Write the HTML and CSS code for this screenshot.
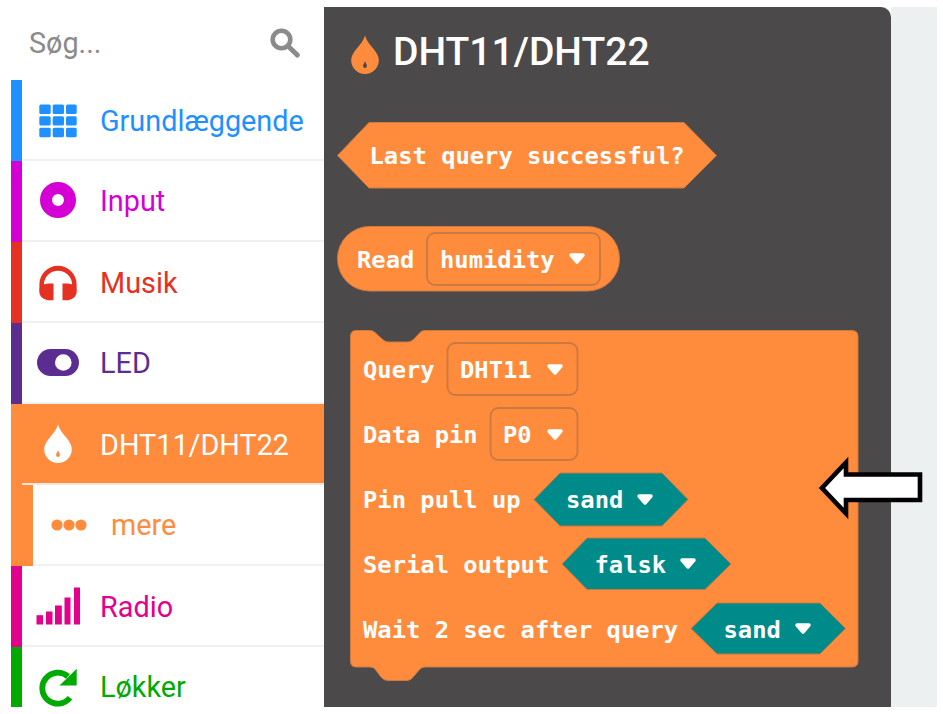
FILE: index.html
```html
<!DOCTYPE html>
<html lang="da">
<head>
<meta charset="utf-8">
<title>DHT11/DHT22</title>
<link rel="stylesheet" href="styles.css">
</head>
<body>
<div class="app">
  <aside class="sidebar">
    <div class="search">
      <input class="search-input" type="text" placeholder="Søg...">
      <svg class="search-icon" viewBox="0 0 30 30"><circle cx="11.5" cy="11.5" r="8.8" fill="none" stroke="currentColor" stroke-width="4.6"/><path d="M18 18l9.3 9" fill="none" stroke="currentColor" stroke-width="5" stroke-linecap="round"/></svg>
    </div>
    <nav class="menu">
      <div class="item basic">
        <span class="bar"></span>
        <div class="row">
          <svg class="icon" viewBox="-22 -22 44 44"><g fill="currentColor"><rect x="-18.7" y="-15.5" width="11.4" height="9.4" rx="1.5"/><rect x="-5.3" y="-15.5" width="11.3" height="9.4" rx="1.5"/><rect x="8" y="-15.5" width="10.7" height="9.4" rx="1.5"/><rect x="-18.7" y="-3.8" width="11.4" height="9.4" rx="1.5"/><rect x="-5.3" y="-3.8" width="11.3" height="9.4" rx="1.5"/><rect x="8" y="-3.8" width="10.7" height="9.4" rx="1.5"/><rect x="-18.7" y="7.8" width="11.4" height="9.4" rx="1.5"/><rect x="-5.3" y="7.8" width="11.3" height="9.4" rx="1.5"/><rect x="8" y="7.8" width="10.7" height="9.4" rx="1.5"/></g></svg>
          <span class="label">Grundlæggende</span>
        </div>
      </div>
      <div class="item input">
        <span class="bar"></span>
        <div class="row">
          <svg class="icon" viewBox="-22 -22 44 44"><circle cx="0" cy="-1" r="12" fill="none" stroke="currentColor" stroke-width="12"/></svg>
          <span class="label">Input</span>
        </div>
      </div>
      <div class="item music">
        <span class="bar"></span>
        <div class="row">
          <svg class="icon" viewBox="-22 -22 44 44"><g fill="currentColor"><path d="M-18.600 8V2.400A18.600 18.600 0 0 1 18.600 2.400V8H14V2.400A14 13.600 0 0 0-14 2.400V8Z"/><path d="M-4.500 1.500H-10Q-18.200 2-18.800 9Q-19 16.500-10 18.200H-4.500Z"/><path d="M4.500 1.500H10Q18.200 2 18.800 9Q19 16.500 10 18.200H4.500Z"/></g></svg>
          <span class="label">Musik</span>
        </div>
      </div>
      <div class="item led">
        <span class="bar"></span>
        <div class="row">
          <svg class="icon" viewBox="-22 -22 44 44"><rect x="-21" y="-14" width="42" height="27" rx="13.500" fill="currentColor"/><circle cx="5.300" cy="-0.500" r="8.300" fill="#fff"/></svg>
          <span class="label">LED</span>
        </div>
      </div>
      <div class="item dht active">
        <span class="bar"></span>
        <div class="row">
          <svg class="icon" viewBox="-22 -22 44 44"><path fill="currentColor" fill-rule="evenodd" d="M0-19.500C1.500-14 5-10.500 9-5.500 12-1.800 13.800 1.500 13.800 5.500 13.800 13 7.500 19 0 19S-13.800 13-13.800 5.500C-13.800 1.500-12-1.800-9-5.500-5-10.500-1.500-14 0-19.500ZM0 6.300C-.6 8.300-1.900 9.400-1.900 11.100A1.900 1.900 0 0 0 1.900 11.100C1.900 9.400 .6 8.300 0 6.300Z"/></svg>
          <span class="label">DHT11/DHT22</span>
        </div>
      </div>
      <div class="item more">
        <span class="bar"></span>
        <div class="row">
          <svg class="icon" viewBox="-22 -22 44 44"><g fill="currentColor"><circle cx="-12" cy="0" r="5.600"/><circle cx="0" cy="0" r="5.600"/><circle cx="12" cy="0" r="5.600"/></g></svg>
          <span class="label">mere</span>
        </div>
      </div>
      <div class="item radio">
        <span class="bar"></span>
        <div class="row">
          <svg class="icon" viewBox="-22 -22 44 44"><g fill="currentColor"><rect x="-21.500" y="9.200" width="6.500" height="9.300"/><rect x="-12" y="5.500" width="6.500" height="13"/><rect x="-3" y="-0.500" width="6.800" height="19"/><rect x="6.500" y="-8.500" width="6" height="27"/><rect x="16" y="-18.500" width="6" height="37"/></g></svg>
          <span class="label">Radio</span>
        </div>
      </div>
      <div class="item loops">
        <span class="bar"></span>
        <div class="row">
          <svg class="icon" viewBox="-22 -22 44 44"><path d="M10-10.500A15.500 15.500 0 1 0 12 10.800" fill="none" stroke="currentColor" stroke-width="5.800"/><path fill="currentColor" d="M18.700-18.200V-1.500H1.500Z"/></svg>
          <span class="label">Løkker</span>
        </div>
      </div>
    </nav>
  </aside>

  <main class="flyout">
    <header class="flyout-head">
      <svg class="head-icon" viewBox="-22 -22 44 44"><path fill="currentColor" fill-rule="evenodd" d="M0-19.500C1.500-14 5-10.500 9-5.500 12-1.800 13.800 1.500 13.800 5.500 13.800 13 7.500 19 0 19S-13.800 13-13.800 5.500C-13.800 1.500-12-1.800-9-5.500-5-10.500-1.500-14 0-19.500ZM0 6.300C-.6 8.300-1.900 9.400-1.900 11.100A1.900 1.900 0 0 0 1.900 11.100C1.900 9.400 .6 8.300 0 6.300Z"/></svg>
      <h1 class="flyout-title">DHT11/DHT22</h1>
    </header>
    <svg class="blocks" viewBox="324 7 567 700">
      <path class="blk" d="M369 122.500H684L716.500 155.500L684 188H369L337.500 155.500Z"/>
      <text class="t" x="369.500" y="164">Last query successful?</text>

      <rect class="blk" x="337.500" y="226.500" width="282" height="64.500" rx="32"/>
      <text class="t" x="357" y="267.500">Read</text>
      <rect class="drop" x="427" y="233" width="173" height="52" rx="8"/>
      <text class="t" x="440" y="267.500">humidity</text>
      <path class="caret" d="M571 255H583L577 262Z"/>

      <path class="blk" d="M356 330.500H370Q373 330.500 375 332.500L382 339Q385 342 388 342H408Q411 342 414 339L420 332.500Q422 330.500 425 330.500H852Q858 330.500 858 336.500V661Q858 667 852 667H425Q422 667 420 669L414 676Q411 680.500 407 680.500H388Q384 680.500 381 677L375 669Q373 667 370 667H356Q350.500 667 350.500 661V336.500Q350.500 330.500 356 330.500Z"/>

      <text class="t" x="363" y="378">Query</text>
      <rect class="drop" x="447.500" y="343" width="130" height="52" rx="8"/>
      <text class="t" x="460" y="378">DHT11</text>
      <path class="caret" d="M549 366H561L555 373Z"/>

      <text class="t" x="363" y="443">Data pin</text>
      <rect class="drop" x="490.500" y="408" width="87" height="52" rx="8"/>
      <text class="t" x="503" y="443">P0</text>
      <path class="caret" d="M549 431H561L555 438Z"/>

      <text class="t" x="363" y="508">Pin pull up</text>
      <path class="hex" d="M560 473H662L688 499.500L662 526H560L534 499.500Z"/>
      <text class="t" x="566" y="508">sand</text>
      <path class="caret" d="M639 496H651L645 503Z"/>

      <text class="t" x="363" y="572.500">Serial output</text>
      <path class="hex" d="M587 538H705L731 564L705 589.500H587L562 564Z"/>
      <text class="t" x="594.500" y="572.500">falsk</text>
      <path class="caret" d="M682 560H694L688 567Z"/>

      <text class="t" x="363" y="637.500">Wait 2 sec after query</text>
      <path class="hex" d="M717 603H820L845.500 628.500L820 654H717L691 628.500Z"/>
      <text class="t" x="723.500" y="637.500">sand</text>
      <path class="caret" d="M797 625H809L803 632Z"/>
    </svg>
  </main>

  <div class="workspace"></div>

  <svg class="callout" viewBox="815 455 112 66"><path d="M920 474.500H846V462.500L822 488L846 513.500V500H920Z" fill="#fff" stroke="#000" stroke-width="4.600"/></svg>
</div>
</body>
</html>
```
FILE: styles.css
```css
* { box-sizing: border-box; }

html, body {
  margin: 0;
  height: 714px;
  overflow: hidden;
  background: #fff;
}

.app {
  position: relative;
  display: flex;
  width: 937px;
  height: 700px;
  margin-top: 7px;
  font-family: Roboto, "Liberation Sans", sans-serif;
}

.sidebar {
  flex: 0 0 324px;
  padding-left: 11px;
  overflow: hidden;
  background: #fff;
}

.search {
  display: flex;
  align-items: center;
  height: 73px;
  padding: 0 24px 2px 18px;
}

.search-input {
  flex: 1;
  min-width: 0;
  padding: 0;
  border: 0;
  outline: 0;
  background: transparent;
  font: 28.800px Roboto, "Liberation Sans", sans-serif;
}

.search-input::placeholder {
  color: #8a8a8a;
  opacity: 1;
}

.search-icon {
  width: 30px;
  height: 30px;
  color: #8b8b8b;
}

.item {
  display: flex;
  height: 81px;
  color: var(--tone);
}

.bar {
  flex: 0 0 11px;
  background: var(--tone);
}

.row {
  flex: 1;
  display: flex;
  align-items: center;
  border-bottom: 2px solid #eef2f2;
}

.icon {
  flex: 0 0 44px;
  width: 44px;
  height: 44px;
  margin: 0 7px 0 14px;
  overflow: visible;
}

.label {
  margin: 2px 0 0 13px;
  font-size: 28.800px;
  white-space: nowrap;
}

.item:nth-child(even) .label {
  margin-top: 0;
}

.basic { --tone: #1e90ff; }
.input { --tone: #d400d4; }
.music { --tone: #e63022; }
.led   { --tone: #5c2d91; }
.dht   { --tone: #ff8b3d; }
.more  { --tone: #ff8b3d; }
.radio { --tone: #e3008c; }
.loops { --tone: #00aa00; }

.active {
  height: 81px;
  background: var(--tone);
  color: #fff;
}

.active .row {
  border-bottom-color: #fbe6d8;
}

.more .bar {
  flex-basis: 22px;
}

.flyout {
  position: relative;
  flex: 0 0 567px;
  overflow: hidden;
  border-top-right-radius: 10px;
  background: #4b4949;
}

.flyout-head {
  display: flex;
  align-items: center;
  height: 96px;
  padding-left: 19px;
  color: #fff;
}

.head-icon {
  width: 44px;
  height: 44px;
  margin: 0 7px 0 0;
  color: #ff8b3d;
}

.flyout-title {
  margin: 0 0 6px -1px;
  font-size: 39px;
  font-weight: 500;
  line-height: 1;
}

.blocks {
  position: absolute;
  inset: 0;
  width: 567px;
  height: 700px;
}

.blk {
  fill: #ff8b3d;
  stroke: #cc7a40;
  stroke-width: 1;
}

.hex {
  fill: #008b8b;
  stroke: #c9773c;
  stroke-width: 1;
}

.drop {
  fill: none;
  stroke: #c87a42;
  stroke-width: 1.800;
}

.caret {
  fill: #fff;
  stroke: #fff;
  stroke-width: 3.500;
  stroke-linejoin: round;
}

.t {
  fill: #fff;
  font-family: "DejaVu Sans Mono", "Liberation Mono", monospace;
  font-size: 23.800px;
  font-weight: 700;
}

.workspace {
  flex: 0 0 46px;
  background: #ecf0f1;
}

.callout {
  position: absolute;
  top: 448px;
  left: 815px;
  width: 112px;
  height: 66px;
}
```
